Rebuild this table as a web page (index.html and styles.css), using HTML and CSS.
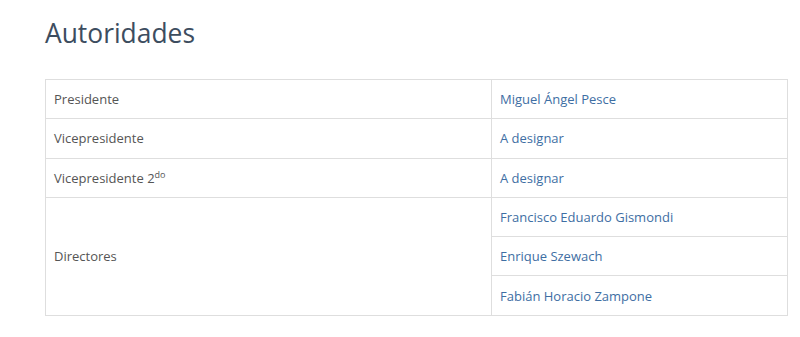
FILE: index.html
```html
<!DOCTYPE html>
<html lang="es">
<head>
<meta charset="utf-8">
<link rel="stylesheet" href="styles.css">
</head>
<body>
<main class="page">
  <h1 class="title">Autoridades</h1>
  <table class="auth">
    <tr><td class="role">Presidente</td><td class="name"><a href="#">Miguel Ángel Pesce</a></td></tr>
    <tr><td class="role">Vicepresidente</td><td class="name"><a href="#">A designar</a></td></tr>
    <tr><td class="role">Vicepresidente 2<sup>do</sup></td><td class="name"><a href="#">A designar</a></td></tr>
    <tr><td class="role" rowspan="3">Directores</td><td class="name"><a href="#">Francisco Eduardo Gismondi</a></td></tr>
    <tr><td class="name"><a href="#">Enrique Szewach</a></td></tr>
    <tr><td class="name"><a href="#">Fabián Horacio Zampone</a></td></tr>
  </table>
</main>
</body>
</html>
```
FILE: styles.css
```css
html, body { margin: 0; padding: 0; background: #fff; }
body { font-family: "Open Sans", "Noto Sans", sans-serif; }
.page { padding: 17px 12px 0 45px; }
.title {
  margin: 0 0 30px 0;
  font-size: 26.4px;
  font-weight: 400;
  line-height: 32px;
  color: #3d4d5f;
}
.auth {
  border-collapse: collapse;
  width: 743px;
  font-size: 13px;
}
.auth td {
  border: 1px solid #dedede;
  padding: 0 8px;
  height: 38.3px;
  color: #555;
  vertical-align: middle;
}
.auth td.role { width: 429px; }
.auth a { color: #3e6ea3; text-decoration: none; }
.auth sup { font-size: 9px; line-height: 0; vertical-align: 5px; }
```
